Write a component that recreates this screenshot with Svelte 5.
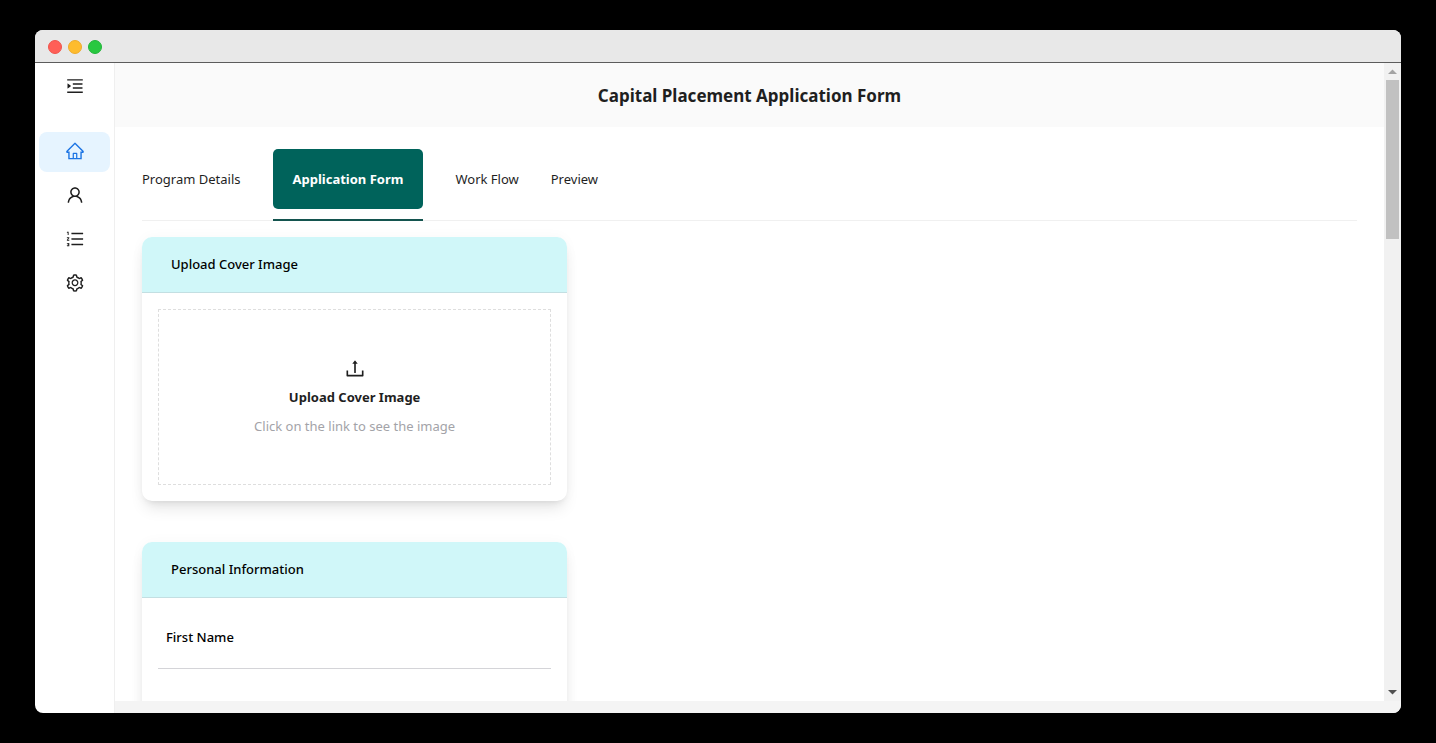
<script>
  const menuIcon =
    'M408 442h480c4.400 0 8-3.600 8-8v-56c0-4.400-3.600-8-8-8H408c-4.400 0-8 3.600-8 8v56c0 4.400 3.600 8 8 8zm-8 204c0 4.400 3.600 8 8 8h480c4.400 0 8-3.600 8-8v-56c0-4.400-3.600-8-8-8H408c-4.400 0-8 3.600-8 8v56zm504-486H120c-4.400 0-8 3.600-8 8v56c0 4.400 3.600 8 8 8h784c4.400 0 8-3.600 8-8v-56c0-4.400-3.600-8-8-8zm0 632H120c-4.400 0-8 3.600-8 8v56c0 4.400 3.600 8 8 8h784c4.400 0 8-3.600 8-8v-56c0-4.400-3.600-8-8-8zM142.400 642.100L298.700 519a8.840 8.840 0 000-13.900L142.400 381.900c-5.800-4.600-14.400-.5-14.400 6.900v246.300a8.900 8.900 0 0014.400 7z';

  const nav = [
    {
      name: 'Home',
      d: 'M946.5 505L560.1 118.8l-25.9-25.9a31.500 31.500 0 00-44.400 0L77.500 505a63.900 63.900 0 00-18.800 46c.4 35.200 29.700 63.300 64.900 63.300h42.500V940h691.800V614.300h43.400c17.100 0 33.200-6.700 45.300-18.800a63.600 63.600 0 0018.700-45.300c0-17-6.700-33.100-18.800-45.200zM568 868H456V664h112v204zm217.900-325.700V868H632V640c0-22.100-17.900-40-40-40H432c-22.100 0-40 17.900-40 40v228H238.100V542.300h-96l370-369.700 23.100 23.100L882 542.300h-96.100z'
    },
    {
      name: 'User',
      d: 'M858.5 763.6a374 374 0 00-80.6-119.500 375.630 375.630 0 00-119.500-80.600c-.4-.2-.8-.3-1.200-.5C719.500 518 760 444.700 760 362c0-137-111-248-248-248S264 225 264 362c0 82.700 40.500 156 102.800 201.100-.4.2-.8.3-1.200.5-44.800 18.900-85 46-119.500 80.600a375.630 375.630 0 00-80.600 119.500A371.700 371.700 0 00136 901.800a8 8 0 008 8.200h60c4.400 0 7.900-3.500 8-7.800 2-77.200 33-149.500 87.800-204.300 56.700-56.700 132-87.900 212.200-87.900s155.500 31.200 212.200 87.900C779 752.700 810 825 812 902.200c.1 4.400 3.600 7.800 8 7.800h60a8 8 0 008-8.200c-1-47.800-10.900-94.300-29.500-138.200zM512 534c-45.900 0-89.100-17.900-121.600-50.400S340 407.900 340 362c0-45.900 17.900-89.100 50.400-121.600S466.100 190 512 190s89.100 17.900 121.600 50.400S684 316.100 684 362c0 45.900-17.900 89.100-50.400 121.600S557.900 534 512 534z'
    },
    {
      name: 'List',
      d: 'M920 760H336c-4.400 0-8 3.600-8 8v56c0 4.400 3.600 8 8 8h584c4.400 0 8-3.600 8-8v-56c0-4.400-3.600-8-8-8zm0-568H336c-4.400 0-8 3.600-8 8v56c0 4.400 3.600 8 8 8h584c4.400 0 8-3.600 8-8v-56c0-4.400-3.600-8-8-8zm0 284H336c-4.400 0-8 3.600-8 8v56c0 4.400 3.600 8 8 8h584c4.400 0 8-3.600 8-8v-56c0-4.400-3.600-8-8-8zM216 712H100c-2.200 0-4 1.800-4 4v34c0 2.200 1.800 4 4 4h72.400v20.500h-35.700c-2.200 0-4 1.800-4 4v34c0 2.200 1.800 4 4 4h35.700V838H100c-2.200 0-4 1.800-4 4v34c0 2.200 1.800 4 4 4h116c2.200 0 4-1.800 4-4V716c0-2.200-1.800-4-4-4zM100 188h38v120c0 2.200 1.800 4 4 4h40c2.200 0 4-1.800 4-4V152c0-4.400-3.600-8-8-8h-78c-2.200 0-4 1.800-4 4v36c0 2.200 1.800 4 4 4zm116 240H100c-2.200 0-4 1.800-4 4v36c0 2.200 1.800 4 4 4h68.400l-70.300 77.700a8.300 8.300 0 00-2.100 5.400V592c0 2.200 1.800 4 4 4h116c2.200 0 4-1.800 4-4v-36c0-2.200-1.800-4-4-4h-68.400l70.300-77.700a8.300 8.300 0 002.100-5.400V432c0-2.200-1.800-4-4-4z'
    },
    {
      name: 'Settings',
      d: 'M924.8 625.7l-65.500-56c3.100-19 4.700-38.400 4.700-57.800s-1.600-38.800-4.700-57.800l65.500-56a32.030 32.030 0 009.300-35.200l-.9-2.600a443.740 443.740 0 00-79.700-137.900l-1.800-2.100a32.120 32.120 0 00-35.100-9.500l-81.300 28.900c-30-24.600-63.500-44-99.700-57.600l-15.700-85a32.050 32.050 0 00-25.800-25.700l-2.700-.5c-52.100-9.400-106.900-9.400-159 0l-2.700.5a32.050 32.050 0 00-25.800 25.700l-15.800 85.400a351.860 351.860 0 00-99 57.400l-81.900-29.100a32 32 0 00-35.100 9.500l-1.800 2.100a446.020 446.020 0 00-79.700 137.900l-.9 2.600c-4.500 12.500-.8 26.500 9.300 35.200l66.300 56.600c-3.100 18.800-4.600 38-4.600 57.100 0 19.200 1.500 38.400 4.600 57.100L99 625.500a32.030 32.030 0 00-9.300 35.200l.9 2.600c18.100 50.400 44.900 96.900 79.700 137.900l1.800 2.100a32.120 32.120 0 0035.100 9.500l81.900-29.100c29.800 24.500 63.100 43.900 99 57.400l15.800 85.400a32.050 32.050 0 0025.800 25.700l2.700.5a449.400 449.400 0 00159 0l2.700-.5a32.050 32.050 0 0025.800-25.700l15.700-85a350 350 0 0099.700-57.600l81.300 28.900a32 32 0 0035.100-9.500l1.800-2.100c34.800-41.100 61.600-87.500 79.700-137.900l.9-2.600c4.500-12.300.8-26.300-9.300-35zM788.300 465.900c2.500 15.100 3.800 30.600 3.800 46.100s-1.300 31-3.800 46.100l-6.600 40.100 74.700 63.900a370.030 370.030 0 01-42.600 73.600L721 702.800l-31.400 25.800c-23.900 19.600-50.500 35-79.300 45.800l-38.100 14.300-17.900 97a377.500 377.500 0 01-85 0l-17.900-97.200-37.800-14.500c-28.500-10.800-55-26.200-78.700-45.700l-31.400-25.900-93.400 33.200c-17-22.900-31.200-47.600-42.600-73.600l75.500-64.500-6.500-40c-2.400-14.900-3.700-30.300-3.700-45.500 0-15.300 1.200-30.600 3.700-45.500l6.500-40-75.500-64.500c11.300-26.100 25.600-50.700 42.600-73.600l93.400 33.200 31.400-25.900c23.700-19.500 50.200-34.900 78.700-45.700l37.900-14.300 17.900-97.200c28.100-3.200 56.800-3.200 85 0l17.900 97 38.100 14.300c28.700 10.800 55.400 26.200 79.300 45.800l31.400 25.800 92.800-32.900c17 22.900 31.200 47.600 42.600 73.600L781.800 426l6.500 39.900zM512 326c-97.200 0-176 78.800-176 176s78.800 176 176 176 176-78.800 176-176-78.800-176-176-176zm79.200 255.200A111.600 111.600 0 01512 614c-29.900 0-58-11.700-79.200-32.800A111.600 111.600 0 01400 502c0-29.900 11.700-58 32.800-79.200C454 401.600 482.100 390 512 390c29.900 0 58 11.600 79.200 32.800A111.600 111.600 0 01624 502c0 29.900-11.700 58-32.800 79.200z'
    }
  ];

  const uploadIcon =
    'M900 628h-60c-4.400 0-8 3.600-8 8v192H192V636c0-4.400-3.600-8-8-8h-60c-4.400 0-8 3.600-8 8v236c0 17.700 14.300 32 32 32h728c17.700 0 32-14.300 32-32V636c0-4.400-3.600-8-8-8zM400 318h74v414c0 4.400 3.600 8 8 8h60c4.400 0 8-3.600 8-8V318h74c6.700 0 10.500-7.700 6.300-12.900l-112-141.700a8 8 0 00-12.600 0l-112 141.700c-4.200 5.200-.4 12.900 6.300 12.900z';

  const tabs = ['Program Details', 'Application Form', 'Work Flow', 'Preview'];
  let page = $state('Home');
  let tab = $state('Application Form');
</script>

{#snippet icon(d, size)}
  <svg viewBox="0 0 1024 1024" width={size} height={size} fill="currentColor" aria-hidden="true"><path {d} /></svg>
{/snippet}

<div class="desktop">
  <div class="window">
    <div class="titlebar">
      <span class="light red"></span>
      <span class="light amber"></span>
      <span class="light green"></span>
    </div>
    <div class="body">
      <aside>
        <button class="toggle" aria-label="Expand menu">{@render icon(menuIcon, 20)}</button>
        <nav>
          {#each nav as item}
            <button class="item" class:current={page === item.name} aria-label={item.name} onclick={() => (page = item.name)}>
              {@render icon(item.d, 20)}
            </button>
          {/each}
        </nav>
      </aside>
      <div class="pane">
        <div class="view">
          <main>
            <header><h1>Capital Placement Application Form</h1></header>
            <div class="content">
              <div class="tabs" role="tablist">
                {#each tabs as name}
                  <button role="tab" aria-selected={tab === name} class:active={tab === name} onclick={() => (tab = name)}>
                    <span>{name}</span>
                  </button>
                {/each}
              </div>
              <section class="card">
                <h2>Upload Cover Image</h2>
                <div class="card-body">
                  <button class="drop">
                    {@render icon(uploadIcon, 22)}
                    <strong>Upload Cover Image</strong>
                    <span>Click on the link to see the image</span>
                  </button>
                </div>
              </section>
              <section class="card">
                <h2>Personal Information</h2>
                <div class="card-body">
                  <div class="field">First Name</div>
                  <div class="field"></div>
                </div>
              </section>
            </div>
          </main>
          <div class="scrollbar" aria-hidden="true">
            <svg class="up" viewBox="0 0 17 17" width="17" height="17"><path d="M4 11h9L8.500 6.500z" /></svg>
            <div class="track"><div class="thumb"></div></div>
            <svg class="down" viewBox="0 0 17 17" width="17" height="17"><path d="M4 6h9l-4.500 4.500z" /></svg>
          </div>
        </div>
        <div class="strip"></div>
      </div>
    </div>
  </div>
</div>

<style>
  :global(body) {
    margin: 0;
    background: #000;
  }
  .desktop,
  .desktop * {
    box-sizing: border-box;
  }
  .desktop {
    height: 100vh;
    padding: 30px 35px;
    display: flex;
    background: #000;
    color: #1f1f1f;
    font-family: 'Noto Sans', 'Open Sans', sans-serif;
    font-size: 13px;
    line-height: 22px;
  }
  button {
    border: 0;
    padding: 0;
    background: none;
    color: inherit;
    font: inherit;
    cursor: pointer;
  }
  svg {
    display: block;
  }
  .window {
    flex: 1;
    min-width: 0;
    display: flex;
    flex-direction: column;
    overflow: hidden;
    border-radius: 8px;
    background: #fff;
  }
  .titlebar {
    flex: none;
    height: 33px;
    display: flex;
    align-items: center;
    gap: 6px;
    padding: 1px 13px 0;
    background: #e8e8e8;
    border-bottom: 1px solid #5c5c5c;
  }
  .light {
    width: 14px;
    height: 14px;
    border-radius: 50%;
    border: 1px solid;
  }
  .red {
    background: #ff5f57;
    border-color: #f0544c;
  }
  .amber {
    background: #febc2e;
    border-color: #eeab2c;
  }
  .green {
    background: #28c840;
    border-color: #22b53a;
  }
  .body {
    flex: 1;
    min-height: 0;
    display: flex;
  }
  aside {
    flex: none;
    width: 80px;
    border-right: 1px solid #efefef;
  }
  .toggle {
    width: 100%;
    height: 46px;
    display: grid;
    place-items: center;
  }
  nav {
    display: flex;
    flex-direction: column;
    gap: 4px;
    padding: 23px 4px;
  }
  .item {
    height: 40px;
    padding-bottom: 2px;
    display: grid;
    place-items: center;
    border-radius: 8px;
  }
  .item.current {
    background: #e6f4ff;
    color: #1c74e4;
  }
  .pane {
    flex: 1;
    min-width: 0;
    display: flex;
    flex-direction: column;
  }
  .view {
    flex: 1;
    min-height: 0;
    display: flex;
  }
  main {
    flex: 1;
    min-width: 0;
    overflow: hidden;
  }
  .strip {
    flex: none;
    height: 12px;
    background: #f4f4f4;
  }
  header {
    padding: 19px 18px 17px;
    background: #fafafa;
    text-align: center;
  }
  h1 {
    margin: 0;
    font-size: 17px;
    line-height: 28px;
    font-weight: 700;
  }
  .content {
    padding: 22px 27px;
  }
  .tabs {
    display: flex;
    gap: 32px;
    margin-bottom: 16px;
    box-shadow: inset 0 -1px #f0f0f0;
  }
  .tabs button {
    padding-bottom: 10px;
    border-bottom: 2px solid transparent;
  }
  .tabs span {
    display: block;
    padding: 19px 0;
  }
  .tabs .active {
    border-color: #14544f;
    color: #fff;
    font-weight: 700;
  }
  .tabs .active span {
    padding: 19px 20px;
    border-radius: 5px;
    background: #00635b;
  }
  .card {
    width: 35%;
    margin-bottom: 41px;
    border-radius: 10px;
    background: #fff;
    box-shadow:
      0 10px 15px -3px rgba(0, 0, 0, 0.1),
      0 4px 6px -4px rgba(0, 0, 0, 0.1),
      0 0 14px rgba(0, 0, 0, 0.03);
  }
  h2 {
    margin: 0;
    padding: 16px 29px 17px;
    border-bottom: 1px solid #c3dfe2;
    border-radius: 10px 10px 0 0;
    background: #d0f7f9;
    color: #000;
    font-size: 13px;
    line-height: 22px;
    font-weight: 500;
  }
  .card-body {
    padding: 16px;
  }
  .drop {
    width: 100%;
    height: 176px;
    display: flex;
    flex-direction: column;
    align-items: center;
    justify-content: center;
    gap: 7px;
    border: 1px dashed #dedede;
  }
  .drop strong {
    font-weight: 700;
  }
  .drop span {
    color: #a3a3a8;
  }
  .field {
    min-height: 55px;
    padding: 12px 8px 20px;
    border-bottom: 1px solid #d4d4d8;
    color: #000;
    font-weight: 500;
  }
  .scrollbar {
    flex: none;
    width: 17px;
    display: flex;
    flex-direction: column;
    background: #f1f1f1;
  }
  .up {
    fill: #a3a3a3;
  }
  .down {
    fill: #505050;
  }
  .track {
    flex: 1;
    padding: 0 2px;
  }
  .thumb {
    height: 159px;
    background: #c1c1c1;
  }
</style>
